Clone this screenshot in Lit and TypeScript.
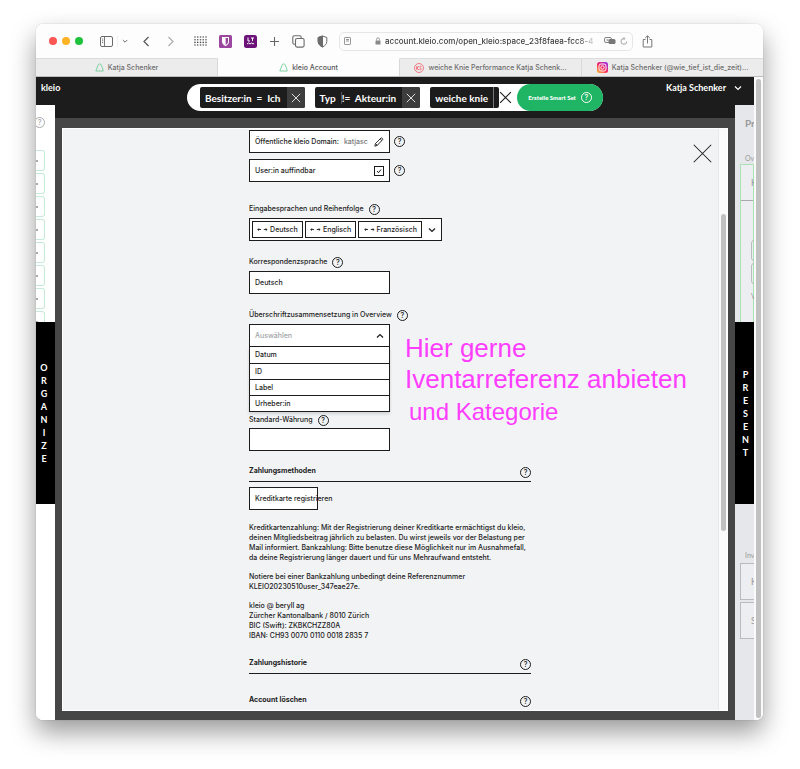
import { LitElement, html, css, svg } from "lit";
import { customElement, property } from "lit/decorators.js";

const cross = (size: number, weight = 1) => html`
  <svg width=${size} height=${size} viewBox="0 0 12 12" fill="none" stroke="currentColor" stroke-width=${weight} aria-hidden="true">
    <path d="M1 1l10 10M11 1L1 11" />
  </svg>
`;

const chevron = (up = false) => html`
  <svg width="8" height="8" viewBox="0 0 8 8" fill="none" stroke="currentColor" stroke-width="1.2" aria-hidden="true">
    <path d=${up ? "M1 5.5L4 2.5l3 3" : "M1 2.5L4 5.5l3-3"} />
  </svg>
`;

const kleioMark = html`
  <svg width="9" height="9" viewBox="0 0 9 9" fill="none" stroke="#6fcf97" stroke-width="0.9" aria-hidden="true">
    <path d="M.8 8L3.4 1.4Q4.6.4 5.8 1.400L7.400 4.600 8.200 8z" />
  </svg>
`;

@customElement("help-hint")
export class HelpHint extends LitElement {
  @property() topic = "";

  static styles = css`
    :host {
      display: inline-flex;
    }
    .hint {
      box-sizing: border-box;
      width: 11px;
      height: 11px;
      padding: 0;
      border: 1px solid currentColor;
      border-radius: 50%;
      background: none;
      color: inherit;
      font: 500 7px/9px Inter, sans-serif;
      text-align: center;
    }
  `;

  render() {
    return html`<button class="hint" type="button" aria-label="Hilfe: ${this.topic}">?</button>`;
  }
}

@customElement("browser-chrome")
export class BrowserChrome extends LitElement {
  static styles = css`
    :host {
      display: block;
      font-family: Inter, sans-serif;
      color: #6b6b6b;
    }
    button {
      display: flex;
      padding: 0;
      border: 0;
      background: none;
      color: inherit;
    }
    .toolbar {
      display: flex;
      align-items: center;
      box-sizing: border-box;
      height: 34px;
      padding: 0 13px;
      background: #fdfdfd;
    }
    .lights {
      display: flex;
      gap: 5px;
      margin-right: 17px;
    }
    .light {
      width: 8px;
      height: 8px;
      border-radius: 50%;
      background: #fc5753;
    }
    .light.min {
      background: #fdb324;
    }
    .light.max {
      background: #1fc23b;
    }
    .sidebar {
      margin-right: 4px;
      padding-right: 4px;
      border-right: 1px solid #f0f0f0;
    }
    .views {
      display: flex;
      gap: 17px;
      margin: 0 19px 0 14px;
    }
    .extensions {
      display: flex;
      align-items: center;
      gap: 12px;
    }
    .faded {
      opacity: 0.6;
    }
    .address {
      display: flex;
      align-items: center;
      box-sizing: border-box;
      flex: 1;
      max-width: 294px;
      height: 19px;
      margin: 0 9px 0 11px;
      padding: 0 4px;
      border: 1px solid #e6e6e6;
      border-radius: 5px;
    }
    .address input {
      flex: 1;
      min-width: 0;
      margin: 0 6px 0 4px;
      padding: 0;
      border: 0;
      outline: 0;
      background: none;
      color: #3d3d3d;
      font: 500 8px/12px Inter, sans-serif;
      -webkit-mask-image: linear-gradient(to right, #000 90%, transparent);
      mask-image: linear-gradient(to right, #000 90%, transparent);
    }
    .lock {
      margin-left: 24px;
    }
    .reload {
      margin-left: 4px;
    }
    .tabs {
      display: flex;
      height: 18px;
      border-bottom: 1px solid #b9bdbb;
    }
    .tab {
      display: flex;
      align-items: center;
      justify-content: center;
      gap: 4px;
      flex: 1;
      min-width: 0;
      border-top: 1px solid #dcdcdc;
      border-right: 1px solid #d9d9d9;
      background: #ececec;
      color: #6d6d6d;
      font: 500 7px/12px Inter, sans-serif;
      text-decoration: none;
      white-space: nowrap;
    }
    .tab.active {
      border-top-color: #fdfdfd;
      background: #fdfdfd;
      color: #555;
    }
    .tab:last-child {
      border-right: 0;
    }
  `;

  render() {
    return html`
      <div class="toolbar">
        <div class="lights">
          <span class="light"></span><span class="light min"></span><span class="light max"></span>
        </div>
        <button class="sidebar" aria-label="Seitenleiste">
          <svg width="13" height="11" viewBox="0 0 13 11" fill="none" stroke="#6b6b6b">
            <rect x=".5" y=".5" width="12" height="10" rx="1.5" />
            <path d="M4.5.5v10M2 3h1.2M2 4.8h1.2M2 6.6h1.2" stroke-width=".9" />
          </svg>
        </button>
        <button aria-label="Tabgruppen">
          <svg width="6" height="6" viewBox="0 0 6 6" fill="none" stroke="currentColor"><path d="M.8 2L3 4.2 5.2 2" /></svg>
        </button>
        <div class="views">
          <button aria-label="Zurück">
            <svg width="8" height="11" viewBox="0 0 8 11" fill="none" stroke="#555" stroke-width="1.2"><path d="M6.5 1L2 5.5 6.5 10" /></svg>
          </button>
          <button class="faded" aria-label="Vorwärts">
            <svg width="8" height="11" viewBox="0 0 8 11" fill="none" stroke="#777" stroke-width="1.2"><path d="M1.5 1L6 5.5 1.5 10" /></svg>
          </button>
        </div>
        <div class="extensions">
          <button aria-label="Übersicht">
            <svg width="13" height="10" viewBox="0 0 13 10" fill="#555">
              ${[1, 3.7, 6.5, 9.200, 12].map((x) => [1, 3.7, 6.4, 9].map((y) => svg`<circle cx=${x} cy=${y} r=".8" />`))}
            </svg>
          </button>
          <button aria-label="Passwörter">
            <svg width="13" height="13" viewBox="0 0 13 13">
              <rect width="13" height="13" rx="1.5" fill="#9b479f" />
              <path d="M3 2h7v4.5C10 8.8 8.5 10.2 6.5 11.2 4.5 10.2 3 8.8 3 6.5z" fill="#fff" />
              <path d="M6.6 3v7C8.2 9.1 9 8 9 6.5V3z" fill="#9b479f" />
            </svg>
          </button>
          <button aria-label="LanguageTool">
            <svg width="13" height="13" viewBox="0 0 13 13" fill="none" stroke="#fff">
              <rect width="13" height="13" rx="2.5" fill="#6c1279" stroke="none" />
              <path d="M4 2.5V6h2M7 3h3M8.5 3v3.2M3 9l1.5-1L6 9l1.5-1L9 9l1-.7" />
            </svg>
          </button>
          <button aria-label="Neuer Tab">
            <svg width="11" height="9" viewBox="0 0 11 9" stroke="#666" stroke-width="1.1"><path d="M5.5 0v9M1 4.5h9" /></svg>
          </button>
          <button aria-label="Tabübersicht">
            <svg width="13" height="13" viewBox="0 0 13 13" fill="#fdfdfd" stroke="#6b6b6b" stroke-width="1.1">
              <rect x=".8" y=".8" width="8.4" height="8.4" rx="1.5" />
              <rect x="3.5" y="3.5" width="8.6" height="8.6" rx="1.5" />
            </svg>
          </button>
          <button aria-label="Datenschutz">
            <svg width="11" height="13" viewBox="0 0 11 13" fill="none" stroke="#6b6b6b">
              <path d="M5.5 1l4.3 1.5V6.5C9.800 9 8 10.8 5.5 12 3 10.8 1.2 9 1.2 6.5v-4z" />
              <path d="M5.5 1v11C3 10.8 1.2 9 1.2 6.5v-4z" fill="#6b6b6b" />
            </svg>
          </button>
        </div>
        <label class="address">
          <svg width="7" height="8" viewBox="0 0 7 8" fill="none" stroke="#8a8a8a" stroke-width=".9" aria-hidden="true">
            <rect x=".5" y=".5" width="6" height="7" rx=".6" /><path d="M2 2.5h3M2 4h3" />
          </svg>
          <svg class="lock" width="6" height="8" viewBox="0 0 6 8" aria-hidden="true">
            <rect x=".5" y="3.5" width="5" height="4" rx=".6" fill="#8a8a8a" />
            <path d="M1.6 3.5V2.2a1.4 1.4 0 0 1 2.8 0v1.3" fill="none" stroke="#8a8a8a" stroke-width=".8" />
          </svg>
          <input aria-label="Adresse" .value=${"account.kleio.com/open_kleio:space_23f8faea-fcc8-4"} />
          <svg width="12" height="8" viewBox="0 0 12 8" aria-hidden="true">
            <rect x=".5" y=".5" width="7" height="5" rx="1.5" fill="none" stroke="#777" stroke-width=".9" />
            <rect x="4.5" y="2" width="7" height="5" rx="1.5" fill="#777" />
            <path d="M2.5 2l2 2.2M4.5 2l-2 2.2" stroke="#777" stroke-width=".6" />
          </svg>
          <svg class="reload" width="8" height="8" viewBox="0 0 8 8" fill="none" stroke="#999" stroke-width=".9" aria-hidden="true">
            <path d="M6.8 4.5a2.9 2.9 0 1 1-2.6-3M3.5.2L5 1.6 3.6 3" />
          </svg>
        </label>
        <button aria-label="Teilen">
          <svg width="11" height="13" viewBox="0 0 11 13" fill="none" stroke="#777">
            <path d="M3.5 4.5h-2.3v7.5h8.6V4.5H7.5M5.5 8.5V1M3.2 3l2.3-2.2L7.8 3" />
          </svg>
        </button>
      </div>
      <nav class="tabs">
        <a class="tab" href="#">${kleioMark}Katja Schenker</a>
        <a class="tab active" href="#">${kleioMark}kleio Account</a>
        <a class="tab" href="#">
          <svg width="10" height="10" viewBox="0 0 10 10" aria-hidden="true">
            <circle cx="5" cy="5" r="4.5" fill="none" stroke="#f0606a" stroke-width=".8" />
            <path d="M2.8 3v4M4.8 3L3 5l1.9 2M7.4 3.4C5.6 2.6 5.2 4.7 6.5 5S7.2 7.4 5.5 6.6" fill="none" stroke="#f0606a" stroke-width=".9" />
          </svg>
          weiche Knie Performance Katja Schenk...
        </a>
        <a class="tab" href="#">
          <svg width="11" height="11" viewBox="0 0 11 11" aria-hidden="true">
            <defs>
              <linearGradient id="insta" x1="0" y1="1" x2=".8" y2="0">
                <stop offset="0" stop-color="#ffc33c" /><stop offset=".5" stop-color="#fb2c5b" /><stop offset="1" stop-color="#a52fe0" />
              </linearGradient>
            </defs>
            <rect width="11" height="11" rx="2.5" fill="url(#insta)" />
            <rect x="2" y="2" width="7" height="7" rx="2" fill="none" stroke="#fff" stroke-width=".9" />
            <circle cx="5.5" cy="5.5" r="1.7" fill="none" stroke="#fff" stroke-width=".9" />
          </svg>
          Katja Schenker (@wie_tief_ist_die_zeit)...
        </a>
      </nav>
    `;
  }
}

@customElement("account-dialog")
export class AccountDialog extends LitElement {
  static styles = css`
    :host {
      position: relative;
      display: flex;
      min-height: 0;
      border: 1px solid #fff;
      background: #f2f3f5;
      color: #1c1c1c;
      font: 500 7px/10px Inter, sans-serif;
    }
    button,
    input {
      color: inherit;
      font: inherit;
    }
    .body {
      flex: 1;
      min-width: 0;
      padding-right: 1px;
      overflow: hidden;
    }
    .column {
      width: 282px;
      margin: 0 auto;
    }
    .rows {
      display: grid;
      gap: 6px;
      padding: 1px 0 6px;
    }
    .row {
      display: flex;
      align-items: center;
      gap: 4px;
    }
    .box {
      display: flex;
      align-items: center;
      box-sizing: border-box;
      width: 141px;
      height: 23px;
      padding: 0 5px;
      border: 1px solid #1c1c1c;
      border-radius: 0;
      background: #fff;
      text-align: left;
    }
    .box > svg {
      flex: none;
      margin-left: auto;
    }
    .domain {
      width: 25px;
      margin-left: 5px;
      padding: 0;
      border: 0;
      background: none;
      color: #777;
    }
    .check {
      appearance: none;
      box-sizing: border-box;
      width: 10px;
      height: 10px;
      margin: 0 0 0 auto;
      border: 1px solid #1c1c1c;
      background: url("data:image/svg+xml,%3Csvg xmlns='http://www.w3.org/2000/svg' viewBox='0 0 8 8'%3E%3Cpath d='M2 4l1.5 1.7L6 2.5' fill='none' stroke='%231c1c1c'/%3E%3C/svg%3E") center / 8px;
    }
    .caption {
      display: flex;
      align-items: center;
      gap: 5px;
      height: 18px;
      margin-top: 12px;
      white-space: nowrap;
    }
    .caption.tight {
      height: 16px;
      margin-top: 0;
    }
    .languages {
      width: 193px;
      gap: 2px;
      padding: 0 2px;
    }
    .language {
      display: flex;
      align-items: center;
      justify-content: center;
      gap: 2px;
      box-sizing: border-box;
      flex: 1 1 auto;
      height: 17px;
      padding: 0;
      border: 1px solid #1c1c1c;
      background: #fff;
    }
    .toggle {
      display: flex;
      flex: none;
      padding: 0 3px 0 4px;
      border: 0;
      background: none;
    }
    .placeholder {
      color: #a0a3a6;
    }
    .options {
      box-sizing: border-box;
      width: 141px;
      margin: 0;
      padding: 0;
      border: 1px solid #1c1c1c;
      border-top: 0;
      background: #fff;
      box-shadow: 0 2px 3px #0002;
      list-style: none;
    }
    .option {
      box-sizing: border-box;
      height: 16px;
      padding: 0 5px;
      border-top: 1px solid #1c1c1c;
      line-height: 15px;
    }
    .option:first-child {
      border-top: 0;
    }
    .section {
      display: flex;
      align-items: flex-start;
      justify-content: space-between;
      box-sizing: border-box;
      height: 19px;
      margin: 0;
      border-bottom: 1px solid #1c1c1c;
      font-size: 7px;
      font-weight: 700;
      line-height: 16px;
    }
    .section help-hint {
      margin-top: 4px;
    }
    .payment {
      margin-top: 12px;
    }
    .card {
      width: 69px;
      margin: 5px 0 13px;
      white-space: nowrap;
    }
    .text {
      margin: 0 0 9px;
      white-space: nowrap;
    }
    .history {
      margin: 14px 0 18px;
    }
    .close {
      position: absolute;
      top: 14px;
      right: 14px;
      display: flex;
      padding: 0;
      border: 0;
      background: none;
    }
    .track {
      flex: none;
      box-sizing: border-box;
      width: 9px;
      padding-top: 85px;
      border-left: 1px solid #e6e8ea;
      background: #fbfbfb;
    }
    .thumb {
      width: 5px;
      height: 317px;
      margin-left: 2px;
      border-radius: 3px;
      background: #c1c1c1;
    }
    .note {
      position: absolute;
      top: 204px;
      left: calc(50% + 10px);
      color: #ff3dff;
      font: 26px/31px "Liberation Sans", sans-serif;
      white-space: nowrap;
    }
    .note p {
      margin: 0;
    }
    .note .small {
      padding-left: 4px;
      font-size: 24px;
      line-height: 34px;
    }
  `;

  private arrows = html`
    <svg width="11" height="5" viewBox="0 0 11 5" fill="none" stroke="#1c1c1c" stroke-width=".9" aria-hidden="true">
      <path d="M.8 2.5h3.2M2 1.300L.8 2.5 2 3.700M6.800 2.5H10M8.800 1.300L10 2.5 8.800 3.700" />
    </svg>
  `;

  render() {
    return html`
      <div class="body">
        <form class="column">
          <div class="rows">
            <div class="row">
              <div class="box">
                <label for="domain">Öffentliche kleio Domain:</label>
                <input class="domain" id="domain" .value=${"katjasc"} />
                <svg width="10" height="10" viewBox="0 0 10 10" fill="none" stroke="#1c1c1c" stroke-width=".9" aria-hidden="true">
                  <path d="M.8 9.2l.7-2.700L7 1c.6-.6 2.200.8 1.700 1.500L3.300 8.400zM1.500 6.500l1.800 1.900M6.200 2l1.700 1.600" />
                </svg>
              </div>
              <help-hint topic="Domain"></help-hint>
            </div>
            <div class="row">
              <div class="box">
                <label for="findable">User:in auffindbar</label>
                <input class="check" id="findable" type="checkbox" checked />
              </div>
              <help-hint topic="Auffindbarkeit"></help-hint>
            </div>
          </div>

          <div class="caption">
            <span>Eingabesprachen und Reihenfolge</span><help-hint topic="Eingabesprachen"></help-hint>
          </div>
          <div class="box languages">
            ${["Deutsch", "Englisch", "Französisch"].map(
              (name) => html`<button type="button" class="language">${this.arrows}${name}</button>`
            )}
            <button type="button" class="toggle" aria-label="Sprachen wählen">${chevron()}</button>
          </div>

          <div class="caption">
            <label for="mail-language">Korrespondenzsprache</label><help-hint topic="Korrespondenzsprache"></help-hint>
          </div>
          <input class="box" id="mail-language" .value=${"Deutsch"} />

          <div class="caption">
            <label for="heading">Überschriftzusammensetzung in Overview</label><help-hint topic="Überschrift"></help-hint>
          </div>
          <button type="button" class="box" id="heading" aria-haspopup="listbox" aria-expanded="true">
            <span class="placeholder">Auswählen</span>${chevron(true)}
          </button>
          <ul class="options" role="listbox" aria-label="Überschriftzusammensetzung">
            ${["Datum", "ID", "Label", "Urheber:in"].map((name) => html`<li class="option" role="option">${name}</li>`)}
          </ul>

          <div class="caption tight">
            <label for="currency">Standard-Währung</label><help-hint topic="Währung"></help-hint>
          </div>
          <input class="box" id="currency" />

          <h2 class="section payment">Zahlungsmethoden<help-hint topic="Zahlungsmethoden"></help-hint></h2>
          <button type="button" class="box card">Kreditkarte registrieren</button>
          <p class="text">
            Kreditkartenzahlung: Mit der Registrierung deiner Kreditkarte ermächtigst du kleio,<br />
            deinen Mitgliedsbeitrag jährlich zu belasten. Du wirst jeweils vor der Belastung per<br />
            Mail informiert. Bankzahlung: Bitte benutze diese Möglichkeit nur im Ausnahmefall,<br />
            da deine Registrierung länger dauert und für uns Mehraufwand entsteht.
          </p>
          <p class="text">
            Notiere bei einer Bankzahlung unbedingt deine Referenznummer<br />
            KLEIO20230510user_347eae27e.
          </p>
          <p class="text">
            kleio @ beryll ag<br />
            Zürcher Kantonalbank / 8010 Zürich<br />
            BIC (Swift): ZKBKCHZZ80A<br />
            IBAN: CH93 0070 0110 0018 2835 7
          </p>
          <h2 class="section history">Zahlungshistorie<help-hint topic="Zahlungshistorie"></help-hint></h2>
          <h2 class="section">Account löschen<help-hint topic="Account löschen"></help-hint></h2>
        </form>
      </div>
      <div class="track"><div class="thumb"></div></div>
      <button class="close" aria-label="Schliessen">${cross(21, 0.6)}</button>
      <div class="note">
        <p>Hier gerne</p>
        <p>Iventarreferenz anbieten</p>
        <p class="small">und Kategorie</p>
      </div>
    `;
  }
}

@customElement("app-root")
export class AppRoot extends LitElement {
  static styles = css`
    :host {
      display: block;
      box-sizing: border-box;
      height: 100vh;
      padding: 24px 37px 49px 36px;
      overflow: hidden;
      background: #fff;
      font-family: Lato, sans-serif;
    }
    button {
      padding: 0;
      border: 0;
      background: none;
      color: inherit;
      font: inherit;
    }
    .window {
      display: flex;
      flex-direction: column;
      height: 100%;
      overflow: hidden;
      border-radius: 7px;
      background: #fff;
    }
    .shadow {
      height: 100%;
      border-radius: 7px;
      box-shadow: 0 0 1px #0006, 0 12px 26px #0006;
    }
    .page {
      display: grid;
      grid-template: 28px 13px minmax(0, 1fr) / 19px minmax(0, 1fr) 19px 9px;
      flex: 1;
      min-height: 0;
    }
    .header {
      display: grid;
      grid-area: 1 / 1 / 3 / 4;
      grid-template-columns: 1fr auto 1fr;
      align-items: center;
      background: #1c1c1c;
      color: #fff;
      font-size: 9px;
      font-weight: 700;
      line-height: 12px;
    }
    .brand {
      align-self: start;
      margin: 5px;
      color: #fff;
      text-decoration: none;
    }
    .user {
      display: flex;
      align-items: center;
      gap: 8px;
      align-self: start;
      justify-self: end;
      margin: 5px 12px;
    }
    .search {
      display: flex;
      align-items: center;
      height: 27px;
      padding-left: 13px;
      border-radius: 14px;
      background: #fff;
    }
    .chip {
      display: flex;
      align-items: center;
      height: 21px;
      margin-right: 10px;
      padding-left: 5px;
      overflow: hidden;
      border-radius: 2px;
      background: #1c1c1c;
      font-size: 10px;
      white-space: pre;
    }
    .chip.last {
      margin-right: 0;
    }
    .operator {
      margin-left: 5px;
      border-left: 1px solid #555;
    }
    .remove {
      display: flex;
      align-items: center;
      justify-content: center;
      width: 18px;
      height: 21px;
      margin-left: 6px;
      background: #3d3d3d;
    }
    .edge {
      width: 5px;
      height: 21px;
      margin-left: 5px;
      border-left: 1px solid #777;
    }
    .clear {
      display: flex;
      margin-right: 5px;
      color: #1c1c1c;
    }
    .create {
      display: flex;
      align-items: center;
      justify-content: center;
      gap: 5px;
      width: 86px;
      height: 27px;
      border-radius: 14px;
      background: #1fb564;
      color: #fff;
      font-size: 6px;
      font-weight: 900;
    }
    .rail {
      display: flex;
      flex-direction: column;
      grid-area: 2 / 1 / 4 / 2;
      overflow: hidden;
      background: #fff;
    }
    .rail.right {
      grid-area: 2 / 3 / 4 / 4;
      background: #e5e7eb;
      color: #999;
    }
    .upper {
      display: flex;
      flex-direction: column;
      gap: 2px;
      height: 217px;
      overflow: hidden;
      color: #aaa;
    }
    .upper help-hint {
      margin: 12px 0 20px -2px;
    }
    .item {
      box-sizing: border-box;
      flex: none;
      width: 9px;
      height: 21px;
      padding-top: 9px;
      border: 1px solid #c5ebd8;
      border-left: 0;
      border-radius: 0 3px 3px 0;
    }
    .dot {
      width: 2px;
      height: 2px;
      background: #aaa;
    }
    .side {
      display: flex;
      flex-direction: column;
      align-items: center;
      justify-content: center;
      flex: none;
      height: 182px;
      padding-right: 3px;
      background: #000;
      color: #fff;
      font-size: 9px;
      font-weight: 700;
      line-height: 13px;
    }
    .right .side {
      padding: 0;
      padding-left: 2px;
    }
    .preview {
      box-sizing: border-box;
      height: 217px;
      padding: 12px 0 0 5px;
      overflow: hidden;
      font-size: 7px;
      line-height: 12px;
      white-space: nowrap;
    }
    .title {
      margin: 0 0 23px;
      padding-left: 5px;
      font-size: 10px;
      font-weight: 700;
    }
    .small {
      margin: 0;
      padding-left: 5px;
    }
    .frame {
      box-sizing: border-box;
      height: 160px;
      padding-left: 10px;
      border: 1px solid #a9e2b4;
      background: #eceef2;
    }
    .frame .head {
      height: 35px;
      margin-left: -10px;
      padding-left: 10px;
      border-bottom: 1px solid #aaa;
      font-size: 9px;
      line-height: 36px;
    }
    .slots {
      display: grid;
      gap: 2px;
      margin: 39px 0 6px;
    }
    .slot {
      box-sizing: border-box;
      width: 20px;
      height: 21px;
      border: 1px solid #bbb;
      border-radius: 3px;
    }
    .inventory {
      display: grid;
      gap: 2px;
      padding: 46px 0 0 5px;
      font-size: 7px;
      line-height: 11px;
      white-space: nowrap;
    }
    .inventory .card {
      box-sizing: border-box;
      width: 40px;
      height: 37px;
      padding-left: 10px;
      border: 1px solid #bbb;
      background: #eceef2;
      font-size: 9px;
      line-height: 35px;
    }
    .backdrop {
      display: grid;
      grid-area: 3 / 2;
      min-height: 0;
      padding: 10px 7px 9px;
      background: #464646;
    }
    .scroll {
      grid-area: 1 / 4 / 4 / 5;
      padding: 2px;
      background: #fafafa;
    }
    .bar {
      height: 100%;
      border-radius: 3px;
      background: #c1c1c1;
    }
  `;

  private letters(word: string) {
    return html`<button class="side" aria-label=${word}>${[...word].map((c) => html`<span>${c}</span>`)}</button>`;
  }

  render() {
    return html`
      <div class="shadow">
        <div class="window">
          <browser-chrome></browser-chrome>
          <div class="page">
            <header class="header">
              <a class="brand" href="#">kleio</a>
              <div class="search">
                <span class="chip">Besitzer:in  =  Ich<button class="remove" aria-label="Besitzer entfernen">${cross(10)}</button></span>
                <span class="chip">Typ<span class="operator">!=  Akteur:in</span><button class="remove" aria-label="Typ entfernen">${cross(10)}</button></span>
                <span class="chip last">weiche knie<span class="edge"></span></span>
                <button class="clear" aria-label="Suche leeren">${cross(13)}</button>
                <button class="create">Erstelle Smart Set <help-hint topic="Smart Set"></help-hint></button>
              </div>
              <button class="user">Katja Schenker ${chevron()}</button>
            </header>
            <aside class="rail">
              <div class="upper">
                <help-hint topic="Organize"></help-hint>
                ${Array.from({ length: 8 }, () => html`<div class="item"><div class="dot"></div></div>`)}
              </div>
              ${this.letters("ORGANIZE")}
            </aside>
            <main class="backdrop"><account-dialog></account-dialog></main>
            <aside class="rail right">
              <div class="preview">
                <p class="title">Present</p>
                <p class="small">Overview</p>
                <div class="frame">
                  <div class="head">K</div>
                  <div class="slots"><div class="slot"></div><div class="slot"></div></div>
                  V
                </div>
              </div>
              ${this.letters("PRESENT")}
              <div class="inventory">
                <span class="small">Inventar</span>
                <div class="card">K</div>
                <div class="card">S</div>
              </div>
            </aside>
            <div class="scroll"><div class="bar"></div></div>
          </div>
        </div>
      </div>
    `;
  }
}
